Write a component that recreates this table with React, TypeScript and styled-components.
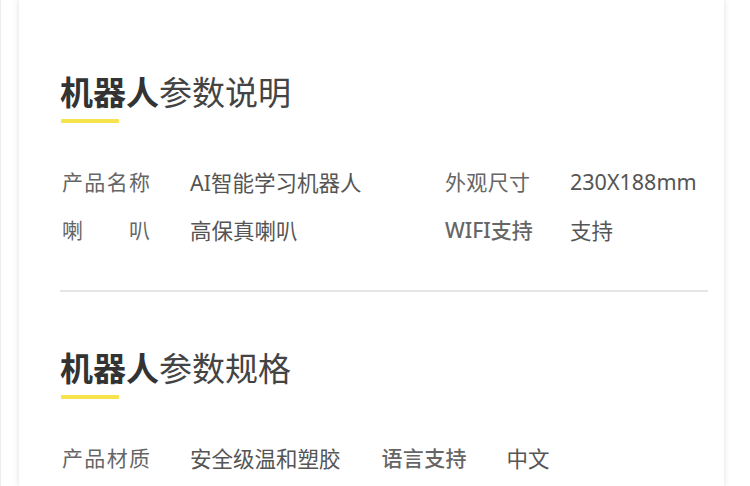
import React from "react";
import styled, { createGlobalStyle } from "styled-components";

const Global = createGlobalStyle`
  html, body { margin: 0; padding: 0; background: #ffffff; }
  body { font-family: "Noto Sans", "Noto Sans CJK SC", sans-serif; }
`;

const Page = styled.div`
  width: 750px;
  height: 486px;
  overflow: hidden;
  padding-left: 18px;
  box-sizing: border-box;
  border-left: 1px solid #ececec;
`;

const Card = styled.div`
  width: 705px;
  min-height: 486px;
  background: #fff;
  box-shadow: 0 0 6px rgba(0, 0, 0, 0.14);
  box-sizing: border-box;
  padding: 71px 16px 0 41px;
`;

const Section = styled.section`
  display: flex;
  flex-direction: column;
`;

const Title = styled.h2`
  margin: 0;
  font-family: "Noto Sans CJK SC", sans-serif;
  font-size: 33px;
  line-height: 40px;
  font-weight: 400;
  color: #444;
  & > b {
    font-weight: 700;
    color: #333;
  }
`;

const Bar = styled.div`
  width: 58px;
  height: 4px;
  margin: 8px 0 0 1px;
  background: #f7e34b;
  border-radius: 1px;
`;

const Grid = styled.div<{ $cols: string; $gap: number }>`
  display: grid;
  grid-template-columns: ${(p) => p.$cols};
  column-gap: ${(p) => p.$gap}px;
  justify-content: start;
  margin-top: 34px;
  padding-left: 2px;
`;

const Item = styled.div`
  display: flex;
  align-items: center;
  height: 48px;
`;

const Label = styled.span<{ $w?: number; $strong?: boolean }>`
  width: ${(p) => p.$w ?? 88}px;
  margin-right: 40px;
  font-size: 21px;
  font-weight: ${(p) => (p.$strong ? 500 : 400)};
  color: #666;
  text-align: justify;
  text-align-last: justify;
  white-space: nowrap;
`;

const Value = styled.span`
  font-size: 21.5px;
  color: #555;
  white-space: nowrap;
`;

const Divider = styled.hr`
  border: none;
  height: 2px;
  background: #e6e6e6;
  margin: 37px 0 55px 0;
`;

type Spec = { label: string; value: string; lw?: number; strong?: boolean };

const SpecGrid: React.FC<{ cols: string; gap: number; items: Spec[] }> = ({
  cols,
  gap,
  items,
}) => (
  <Grid $cols={cols} $gap={gap}>
    {items.map((it) => (
      <Item key={it.label}>
        <Label $w={it.lw} $strong={it.strong}>
          {it.label}
        </Label>
        <Value>{it.value}</Value>
      </Item>
    ))}
  </Grid>
);

export default function App() {
  return (
    <>
      <Global />
      <Page>
        <Card>
          <Section>
            <Title>
              <b>机器人</b>参数说明
            </Title>
            <Bar />
            <SpecGrid
              cols="383px 1fr"
              gap={0}
              items={[
                { label: "产品名称", value: "AI智能学习机器人" },
                { label: "外观尺寸", value: "230X188mm", lw: 85 },
                { label: "喇叭", value: "高保真喇叭" },
                { label: "WIFI支持", value: "支持", lw: 85, strong: true },
              ]}
            />
          </Section>
          <Divider />
          <Section>
            <Title>
              <b>机器人</b>参数规格
            </Title>
            <Bar />
            <SpecGrid
              cols="auto auto"
              gap={41}
              items={[
                { label: "产品材质", value: "安全级温和塑胶" },
                { label: "语言支持", value: "中文", lw: 85, strong: true },
              ]}
            />
          </Section>
        </Card>
      </Page>
    </>
  );
}
